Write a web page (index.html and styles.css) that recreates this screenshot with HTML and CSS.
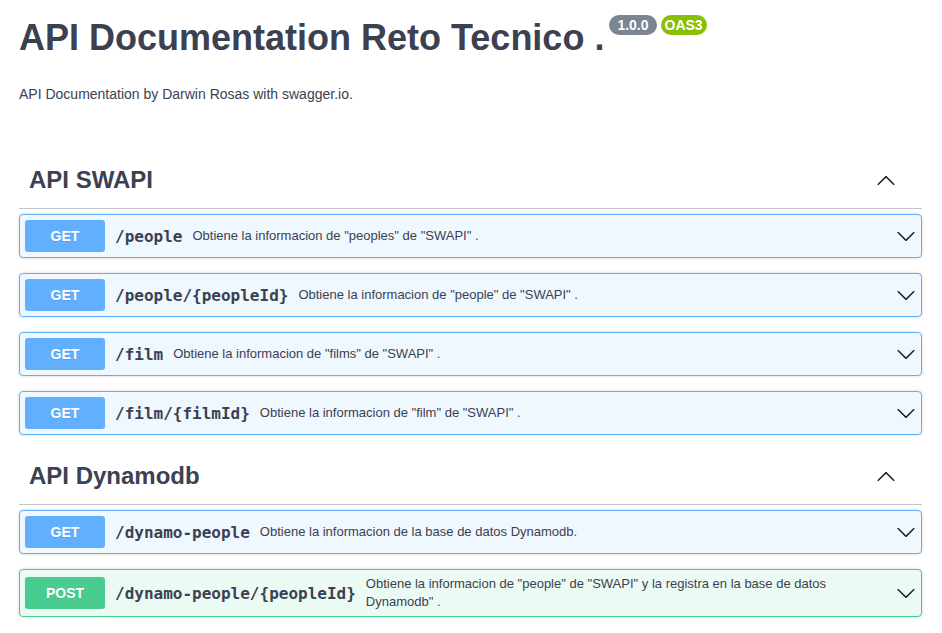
FILE: index.html
```html
<!DOCTYPE html>
<html lang="es">
<head>
<meta charset="utf-8">
<title>API Documentation Reto Tecnico</title>
<link rel="stylesheet" href="styles.css">
</head>
<body>
<div class="wrapper">
  <div class="info">
    <h2 class="title">
      <span class="title-text">API Documentation Reto Tecnico .</span>
      <span class="stamps">
        <small class="stamp version">1.0.0</small>
        <small class="stamp oas">OAS3</small>
      </span>
    </h2>
    <p class="info-desc">API Documentation by Darwin Rosas with swagger.io.</p>
  </div>

  <section class="tag-section">
    <div class="tag-row">
      <h3 class="tag-name">API SWAPI</h3>
      <svg class="tag-arrow" viewBox="0 0 20 20" width="20" height="20"><path d="M17.418 14.908c.272.268.709.268.979 0s.27-.701 0-.969l-7.908-7.83c-.27-.268-.707-.268-.979 0l-7.908 7.83c-.27.268-.27.701 0 .969.271.268.709.268.979 0L10 7.767l7.418 7.141z"/></svg>
    </div>
    <div class="opblock get">
      <div class="summary">
        <span class="method">GET</span>
        <span class="path">/people</span>
        <span class="summary-desc">Obtiene la informacion de "peoples" de "SWAPI" .</span>
        <svg class="op-arrow" viewBox="0 0 20 20" width="20" height="20"><path d="M17.418 6.109c.272-.268.709-.268.979 0s.271.701 0 .969l-7.908 7.83c-.27.268-.707.268-.979 0l-7.908-7.830c-.27-.268-.27-.701 0-.969.271-.268.709-.268.979 0L10 13.25l7.418-7.141z"/></svg>
      </div>
    </div>
    <div class="opblock get">
      <div class="summary">
        <span class="method">GET</span>
        <span class="path">/people/{peopleId}</span>
        <span class="summary-desc">Obtiene la informacion de "people" de "SWAPI" .</span>
        <svg class="op-arrow" viewBox="0 0 20 20" width="20" height="20"><path d="M17.418 6.109c.272-.268.709-.268.979 0s.271.701 0 .969l-7.908 7.83c-.27.268-.707.268-.979 0l-7.908-7.83c-.27-.268-.27-.701 0-.969.271-.268.709-.268.979 0L10 13.25l7.418-7.141z"/></svg>
      </div>
    </div>
    <div class="opblock get">
      <div class="summary">
        <span class="method">GET</span>
        <span class="path">/film</span>
        <span class="summary-desc">Obtiene la informacion de "films" de "SWAPI" .</span>
        <svg class="op-arrow" viewBox="0 0 20 20" width="20" height="20"><path d="M17.418 6.109c.272-.268.709-.268.979 0s.271.701 0 .969l-7.908 7.83c-.27.268-.707.268-.979 0l-7.908-7.83c-.27-.268-.27-.701 0-.969.271-.268.709-.268.979 0L10 13.25l7.418-7.141z"/></svg>
      </div>
    </div>
    <div class="opblock get">
      <div class="summary">
        <span class="method">GET</span>
        <span class="path">/film/{filmId}</span>
        <span class="summary-desc">Obtiene la informacion de "film" de "SWAPI" .</span>
        <svg class="op-arrow" viewBox="0 0 20 20" width="20" height="20"><path d="M17.418 6.109c.272-.268.709-.268.979 0s.271.701 0 .969l-7.908 7.83c-.27.268-.707.268-.979 0l-7.908-7.83c-.27-.268-.27-.701 0-.969.271-.268.709-.268.979 0L10 13.25l7.418-7.141z"/></svg>
      </div>
    </div>
  </section>

  <section class="tag-section">
    <div class="tag-row">
      <h3 class="tag-name">API Dynamodb</h3>
      <svg class="tag-arrow" viewBox="0 0 20 20" width="20" height="20"><path d="M17.418 14.908c.272.268.709.268.979 0s.27-.701 0-.969l-7.908-7.83c-.27-.268-.707-.268-.979 0l-7.908 7.83c-.27.268-.27.701 0 .969.271.268.709.268.979 0L10 7.767l7.418 7.141z"/></svg>
    </div>
    <div class="opblock get">
      <div class="summary">
        <span class="method">GET</span>
        <span class="path">/dynamo-people</span>
        <span class="summary-desc">Obtiene la informacion de la base de datos Dynamodb.</span>
        <svg class="op-arrow" viewBox="0 0 20 20" width="20" height="20"><path d="M17.418 6.109c.272-.268.709-.268.979 0s.271.701 0 .969l-7.908 7.83c-.27.268-.707.268-.979 0l-7.908-7.83c-.27-.268-.27-.701 0-.969.271-.268.709-.268.979 0L10 13.25l7.418-7.141z"/></svg>
      </div>
    </div>
    <div class="opblock post">
      <div class="summary">
        <span class="method">POST</span>
        <span class="path">/dynamo-people/{peopleId}</span>
        <span class="summary-desc">Obtiene la informacion de "people" de "SWAPI" y la registra en la base de datos Dynamodb" .</span>
        <svg class="op-arrow" viewBox="0 0 20 20" width="20" height="20"><path d="M17.418 6.109c.272-.268.709-.268.979 0s.271.701 0 .969l-7.908 7.83c-.27.268-.707.268-.979 0l-7.908-7.83c-.27-.268-.27-.701 0-.969.271-.268.709-.268.979 0L10 13.25l7.418-7.141z"/></svg>
      </div>
    </div>
  </section>
</div>
</body>
</html>
```

FILE: styles.css
```css
html, body {
  margin: 0;
  padding: 0;
  background: #ffffff;
}

body {
  font-family: "Liberation Sans", Arial, sans-serif;
  color: #3b4151;
}

.wrapper {
  padding: 0 20px 0 19px;
}

.info {
  padding-top: 16px;
}

.title {
  display: flex;
  align-items: flex-start;
  margin: 0;
  font-size: 36px;
  line-height: 44px;
  font-weight: 700;
  color: #3b4151;
}

.stamps {
  display: flex;
  gap: 4px;
  margin-left: 5px;
  margin-top: -1px;
}

.stamp {
  display: inline-block;
  font-size: 14px;
  line-height: 16px;
  font-weight: 700;
  color: #ffffff;
  border-radius: 57px;
  padding: 2px 4px;
}

.stamp.version {
  background: #7d8492;
  padding: 2px 8px;
}

.stamp.oas {
  background: #89bf04;
}

.info-desc {
  margin: 24px 0 0;
  font-size: 14px;
  line-height: 20px;
}

.tag-section:first-of-type {
  margin-top: 50px;
}

.tag-row {
  display: flex;
  align-items: center;
  padding: 12px 20px 14px 10px;
  border-bottom: 1px solid rgba(59, 65, 81, 0.3);
  margin-bottom: 5px;
}

.tag-name {
  flex: 1;
  margin: 0;
  font-size: 24px;
  line-height: 28px;
  font-weight: 700;
}

.tag-arrow {
  display: block;
  margin-right: 6px;
  fill: #1f1f1f;
}

.opblock {
  border: 1px solid #61affe;
  border-radius: 4px;
  background: rgba(97, 175, 254, 0.1);
  box-shadow: 0 0 3px rgba(0, 0, 0, 0.19);
  margin-bottom: 15px;
}

.opblock.post {
  border-color: #49cc90;
  background: rgba(73, 204, 144, 0.1);
}

.summary {
  display: flex;
  align-items: center;
  padding: 5px;
}

.method {
  flex-shrink: 0;
  min-width: 80px;
  height: 32px;
  line-height: 32px;
  text-align: center;
  border-radius: 3px;
  background: #61affe;
  color: #ffffff;
  font-size: 14px;
  font-weight: 700;
  text-shadow: 0 1px 0 rgba(0, 0, 0, 0.1);
}

.post .method {
  background: #49cc90;
}

.path {
  flex-shrink: 0;
  padding: 0 10px;
  font-family: "DejaVu Sans Mono", monospace;
  font-size: 16px;
  font-weight: 700;
  color: #3b4151;
}

.summary-desc {
  flex: 1 1 auto;
  font-size: 13px;
  line-height: 18px;
  color: #3b4151;
  padding-right: 20px;
}

.op-arrow {
  flex-shrink: 0;
  display: block;
  fill: #1f1f1f;
}
```
